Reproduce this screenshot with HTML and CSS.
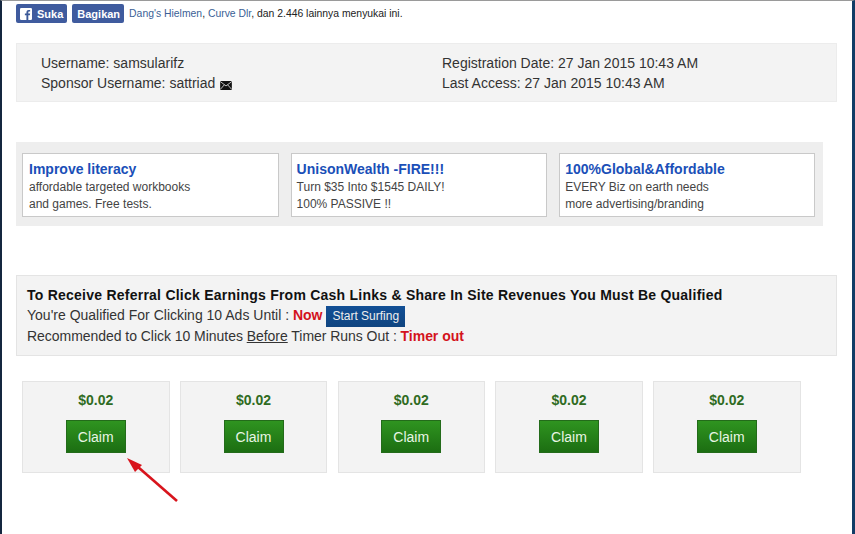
FILE: index.html
```html
<!DOCTYPE html>
<html lang="id">
<head>
<meta charset="utf-8">
<title>Dashboard</title>
<link rel="stylesheet" href="styles.css">
</head>
<body>
<div class="frame">
  <div class="social">
    <a class="fb fb-like"><svg class="fb-icon" width="12" height="12" viewBox="0 0 14 14"><rect width="14" height="14" rx="1.5" fill="#fff"/><path d="M9.7 14V8.6h1.8l.3-2.1H9.7V5.2c0-.6.2-1 1-1h1.1V2.3c-.2 0-.9-.1-1.6-.1-1.6 0-2.7 1-2.7 2.8v1.5H5.7v2.1h1.8V14z" fill="#3b5998"/></svg>Suka</a>
    <a class="fb">Bagikan</a>
    <span class="social-text"><span class="fb-name">Dang's Hielmen</span>, <span class="fb-name">Curve Dlr</span>, dan 2.446 lainnya menyukai ini.</span>
  </div>
  <section class="info">
    <div class="info-col">
      <div>Username: samsularifz</div>
      <div>Sponsor Username: sattriad <svg class="mail" width="12" height="9" viewBox="0 0 13 10"><rect width="13" height="10" fill="#111"/><path d="M0 .5 6.5 5.5 13 .5M0 9.5 4.7 4.2M13 9.5 8.3 4.2" fill="none" stroke="#fff" stroke-width=".8"/></svg></div>
    </div>
    <div class="info-col">
      <div>Registration Date: 27 Jan 2015 10:43 AM</div>
      <div>Last Access: 27 Jan 2015 10:43 AM</div>
    </div>
  </section>
  <section class="ads">
    <article class="ad">
      <h3>Improve literacy</h3>
      <p>affordable targeted workbooks</p>
      <p>and games. Free tests.</p>
    </article>
    <article class="ad">
      <h3>UnisonWealth -FIRE!!!</h3>
      <p>Turn $35 Into $1545 DAILY!</p>
      <p>100% PASSIVE !!</p>
    </article>
    <article class="ad">
      <h3>100%Global&amp;Affordable</h3>
      <p>EVERY Biz on earth needs</p>
      <p>more advertising/branding</p>
    </article>
  </section>
  <section class="notice">
    <div class="notice-title">To Receive Referral Click Earnings From Cash Links &amp; Share In Site Revenues You Must Be Qualified</div>
    <div class="notice-line">You're Qualified For Clicking 10 Ads Until : <b class="red">Now</b> <a class="surf">Start Surfing</a></div>
    <div class="notice-line notice-line-tight">Recommended to Click 10 Minutes <u>Before</u> Timer Runs Out : <b class="red">Timer out</b></div>
  </section>
  <section class="claims">
    <div class="claim"><div class="amount">$0.02</div><a class="claim-btn">Claim</a></div>
    <div class="claim"><div class="amount">$0.02</div><a class="claim-btn">Claim</a></div>
    <div class="claim"><div class="amount">$0.02</div><a class="claim-btn">Claim</a></div>
    <div class="claim"><div class="amount">$0.02</div><a class="claim-btn">Claim</a></div>
    <div class="claim"><div class="amount">$0.02</div><a class="claim-btn">Claim</a></div>
  </section>
  <svg class="arrow" width="60" height="50" viewBox="0 0 60 50"><path d="M51 44 12 10" stroke="#d8141c" stroke-width="2.6" fill="none"/><path d="M1 1 16 8 9 15z" fill="#d8141c"/></svg>
</div>
</body>
</html>
```
FILE: styles.css
```css
* { box-sizing: border-box; }
html, body { margin: 0; height: 100%; }
body {
  background: #fff;
  font-family: "Liberation Sans", Arial, sans-serif;
  overflow: hidden;
}
.frame {
  position: relative;
  width: 855px;
  height: 534px;
  border-left: 2px solid #14263f;
  border-right: 3px solid #123c66;
  border-top: 1px solid #9a9a9a;
  margin: 0;
  padding: 3px 0 0 14px;
}
.social {
  display: flex;
  align-items: flex-start;
  height: 39px;
}
.fb {
  display: flex;
  align-items: center;
  height: 19px;
  margin-right: 3px;
  padding: 0 4px 0 5px;
  background: #3f5b9e;
  border-radius: 2px;
  color: #fff;
  font-size: 11px;
  font-weight: bold;
}
.fb-like { padding: 0 4px; margin-right: 5px; }
.fb-icon { margin-right: 5px; }
.social-text {
  margin-left: 2px;
  margin-top: 3px;
  font-size: 10.4px;
  line-height: 14px;
  color: #222;
}
.fb-name { color: #3b5f96; }
.info {
  display: flex;
  width: 821px;
  height: 59px;
  padding: 9px 0 0 24px;
  background: #f3f3f3;
  border: 1px solid #ececec;
  font-size: 14px;
  line-height: 20px;
  color: #333;
}
.info-col { flex: none; width: 394px; }
.info-col:first-child { width: 401px; }
.mail { vertical-align: -2px; margin-left: 1px; }
.ads {
  display: flex;
  gap: 12px;
  width: 807px;
  height: 84px;
  margin-top: 40px;
  padding: 11px 6px 0 6px;
  background: #eeeeee;
}
.ad {
  flex: none;
  width: 256.6px;
  height: 64px;
  padding: 7px 5px 0 5px;
  background: #fff;
  border: 1px solid #c9c9c9;
}
.ad:first-child { padding-left: 6px; }
.ad:last-child { width: 256px; }
.ad h3 {
  margin: 0 0 2px;
  font-size: 14px;
  line-height: 16px;
  font-weight: bold;
  color: #1a4fb8;
}
.ad p {
  margin: 0;
  font-size: 12px;
  line-height: 17px;
  color: #444;
}
.notice {
  width: 821px;
  height: 81px;
  margin-top: 49px;
  padding: 11px 0 0 10px;
  background: #f3f3f3;
  border: 1px solid #e4e4e4;
  color: #333;
}
.notice-title {
  margin-bottom: 2px;
  font-size: 14px;
  letter-spacing: .24px;
  line-height: 16px;
  font-weight: bold;
  color: #111;
}
.notice-line {
  height: 21px;
  font-size: 14px;
  line-height: 21px;
}
.notice-line-tight { letter-spacing: -.04px; }
.red { color: #d3121c; }
.surf {
  display: inline-block;
  height: 21px;
  padding: 0 6px;
  vertical-align: middle;
  background: linear-gradient(#124f95, #0f4480);
  color: #eee;
  font-size: 12px;
  line-height: 21px;
}
.claims {
  display: flex;
  gap: 10.25px;
  margin-top: 25px;
  padding-left: 6px;
}
.claim {
  flex: none;
  width: 147.5px;
  height: 92px;
  padding-top: 10px;
  background: #f3f3f3;
  border: 1px solid #e4e4e4;
  text-align: center;
}
.amount {
  font-size: 14px;
  line-height: 16px;
  font-weight: bold;
  color: #2f6b22;
}
.claim-btn {
  display: block;
  width: 60px;
  height: 33px;
  margin: 12px auto 0;
  background: linear-gradient(#2f9420, #1c6e12);
  border: 1px solid #236b1a;
  color: #e8f5e4;
  font-size: 14px;
  line-height: 32px;
}
.arrow {
  position: absolute;
  left: 124px;
  top: 456px;
}
```
